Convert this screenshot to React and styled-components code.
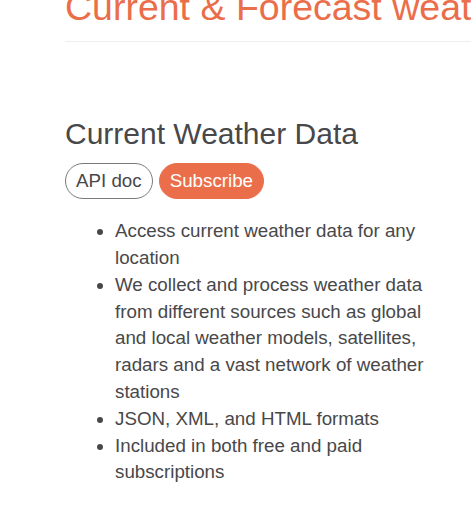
import styled, { createGlobalStyle } from "styled-components";

const Global = createGlobalStyle`
    body {
        margin: 0;
        background: #ffffff;
        font-family: "Liberation Sans", Arial, sans-serif;
        color: #48484a;
        overflow: hidden;
    }
`

const Page = styled.div`
    padding-left: 65px;
    overflow: hidden;
`

const Header = styled.h1`
    margin: -13px 0 0 0;
    font-size: 37.5px;
    font-weight: 400;
    line-height: 1.1;
    color: #eb6e4b;
    white-space: nowrap;
`

const Rule = styled.hr`
    margin: 13px 0 0 0;
    border: none;
    border-top: 1px solid #eeeeee;
    width: 100%;
`

const Section = styled.section`
    padding-top: 75px;
`

const Title = styled.h2`
    margin: 0;
    font-size: 30px;
    font-weight: 400;
    line-height: 1.1;
    color: #48484a;
`

const Actions = styled.div`
    display: flex;
    gap: 6px;
    margin-top: 13px;
`

const Pill = styled.button`
    font-family: "Liberation Sans", Arial, sans-serif;
    font-size: 18.75px;
    height: 36px;
    padding: 0 10px;
    border-radius: 18px;
    border: 1px solid ${props => props.$filled ? "#eb6e4b" : "#7a7a7a"};
    background: ${props => props.$filled ? "#eb6e4b" : "#ffffff"};
    color: ${props => props.$filled ? "#ffffff" : "#48484a"};
`

const List = styled.ul`
    margin: 19px 0 0 0;
    padding-left: 50px;
    width: 320px;
    font-size: 18.75px;
    line-height: 26.8px;
`

const items = [
    "Access current weather data for any location",
    "We collect and process weather data from different sources such as global and local weather models, satellites, radars and a vast network of weather stations",
    "JSON, XML, and HTML formats",
    "Included in both free and paid subscriptions",
]

const App = () => {
    return (
        <Page>
            <Global />
            <Header>Current &amp; Forecast weather data collection</Header>
            <Rule />
            <Section>
                <Title>Current Weather Data</Title>
                <Actions>
                    <Pill>API doc</Pill>
                    <Pill $filled>Subscribe</Pill>
                </Actions>
                <List>
                    {items.map(text => <li key={text}>{text}</li>)}
                </List>
            </Section>
        </Page>
    )
}

export default App;
